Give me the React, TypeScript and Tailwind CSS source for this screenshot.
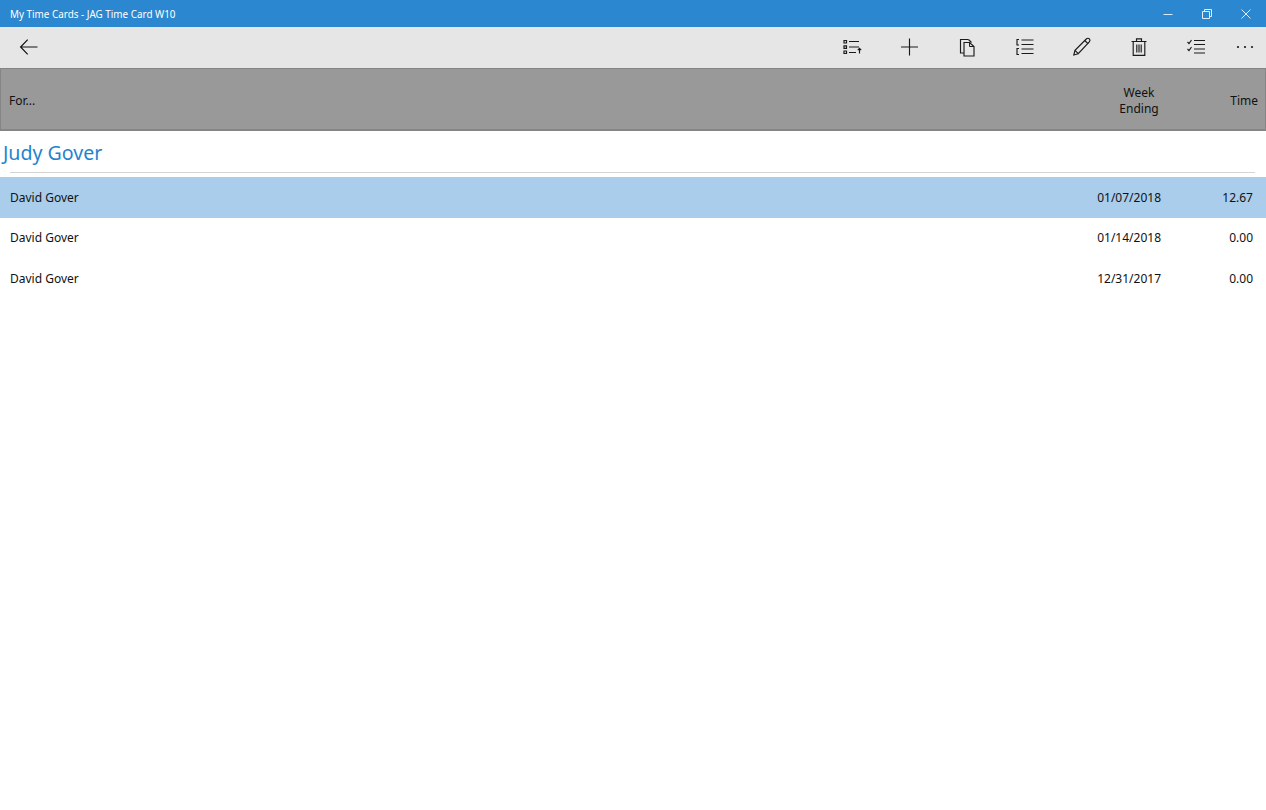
const font = { fontFamily: '"Noto Sans", "Open Sans", sans-serif' };

function Icon({ children }: { children: React.ReactNode }) {
  return (
    <svg width="24" height="24" viewBox="0 0 24 24" fill="none" stroke="#1a1a1a" strokeWidth="1.15">
      {children}
    </svg>
  );
}

function Tool({ children }: { children: React.ReactNode }) {
  return (
    <div className="w-[57.4px] h-[39px] flex items-center justify-center shrink-0">
      <Icon>{children}</Icon>
    </div>
  );
}

function Row({ name, date, time, selected }: { name: string; date: string; time: string; selected?: boolean }) {
  return (
    <div className={`h-[40.5px] flex items-center pt-[1px] text-[12px] text-[#111] ${selected ? "bg-[#a9cdea]" : ""}`}>
      <div className="flex-1 pl-[10px]">{name}</div>
      <div className="w-[100px] text-right">{date}</div>
      <div className="w-[105px] text-right pr-[13px]">{time}</div>
    </div>
  );
}

export default function App() {
  return (
    <div className="w-[1266px] h-[810px] bg-white overflow-hidden" style={font}>
      <div className="h-[27px] bg-[#2a87d0] flex items-center text-white">
        <div className="flex-1 pl-[10px] pt-[2px] text-[9.9px]">My Time Cards - JAG Time Card W10</div>
        <div className="flex items-center pr-[1px]">
          <div className="w-[39px] flex justify-center">
            <svg width="12" height="12" viewBox="0 0 12 12" stroke="#dcecf8" fill="none"><path d="M1.5 6.5h9" /></svg>
          </div>
          <div className="w-[39px] flex justify-center">
            <svg width="12" height="12" viewBox="0 0 12 12" stroke="#dcecf8" fill="none"><path d="M1.5 3.5h7v7h-7z" /><path d="M3.5 3.5v-2h7v7h-2" /></svg>
          </div>
          <div className="w-[39px] flex justify-center">
            <svg width="12" height="12" viewBox="0 0 12 12" stroke="#dcecf8" fill="none"><path d="M1.5 1.5l9 9M10.5 1.5l-9 9" /></svg>
          </div>
        </div>
      </div>

      <div className="h-[41px] bg-[#e6e6e6] flex items-center pb-[2px]">
        <div className="w-[58px] flex justify-center">
          <svg width="20" height="18" viewBox="0 0 20 18" fill="none" stroke="#111" strokeWidth="1.2"><path d="M18.5 9H2M8.7 1.7L1.6 9l7.1 7.3" /></svg>
        </div>
        <div className="flex-1" />
        <div className="flex items-center">
          <Tool>
            <path d="M4 5.5h2.5v2.5H4zM4 10.8h2.5v2.5H4zM4 16h2.5v2.5H4z" strokeWidth="1.2" />
            <path d="M9 6.5h10M9 12h10M9 17.5h7" strokeWidth="1.2" />
            <path d="M19.5 18.5v-5M17.8 15.2l1.7-1.8 1.7 1.8" />
          </Tool>
          <Tool>
            <path d="M12.5 3.5v17M4 12h17" />
          </Tool>
          <Tool>
            <path d="M13.5 4.5H5.5v13.5H9" />
            <path d="M13.5 4.5l3 3" />
            <path d="M9 7.5h5.5l4.5 4v9.5H9z" />
            <path d="M14.5 7.5v4h4.5" strokeWidth="1" />
          </Tool>
          <Tool>
            <path d="M7 4.5H5v5.5h2M7 13.5H5v6h2" />
            <path d="M9.5 5h12M9.5 9.5h12M9.5 14h12M9.5 18.5h12" strokeWidth="1.2" />
          </Tool>
          <Tool>
            <path d="M3.8 20l1.2-4.7L16.3 4c1-1 2.3-1 3.1-.1s.8 2-.1 3L8.2 18.7z" />
            <path d="M5 15.3l3.2 3.4M14.8 5.5l3.3 3.3" />
          </Tool>
          <Tool>
            <path d="M4.5 6.5h15M9.5 6.5V3.8h5v2.7" />
            <path d="M6.2 6.5v13.8h11.6V6.5" />
            <path d="M9.8 9.5v8M12 9.5v8M14.2 9.5v8" />
          </Tool>
          <Tool>
            <path d="M3.5 7l1.5 1.5L7.5 5M3.5 14l1.5 1.5L7.5 12" />
            <path d="M10 5.5h11M10 9.5h11M10 14h11M10 18h11" strokeWidth="1.2" />
          </Tool>
          <div className="w-[39px] h-[39px] flex items-center justify-center shrink-0">
            <Icon>
              <circle cx="5" cy="12" r="1.1" fill="#1a1a1a" stroke="none" />
              <circle cx="12" cy="12" r="1.1" fill="#1a1a1a" stroke="none" />
              <circle cx="19" cy="12" r="1.1" fill="#1a1a1a" stroke="none" />
            </Icon>
          </div>
          <div className="w-[2px] shrink-0" />
        </div>
      </div>

      <div className="h-[63px] bg-[#999999] border border-[#858585] border-b-2 flex items-center text-[12px] text-[#111] pt-[4px]">
        <div className="flex-1 pl-[8px]">For...</div>
        <div className="w-[70px] text-center leading-[16px] mr-[51px]">
          Week
          <br />
          Ending
        </div>
        <div className="w-[40px] text-right pr-[7px]">Time</div>
      </div>

      <div className="h-[41px] flex items-end pl-[3px] pb-[5px]">
        <div className="text-[19.6px] leading-[28px] text-[#1f84cd]">Judy Gover</div>
      </div>
      <div className="ml-[10px] mr-[11px] h-px bg-[#d4d4d4] mb-[4px]" />

      <Row name="David Gover" date="01/07/2018" time="12.67" selected />
      <Row name="David Gover" date="01/14/2018" time="0.00" />
      <Row name="David Gover" date="12/31/2017" time="0.00" />
    </div>
  );
}
